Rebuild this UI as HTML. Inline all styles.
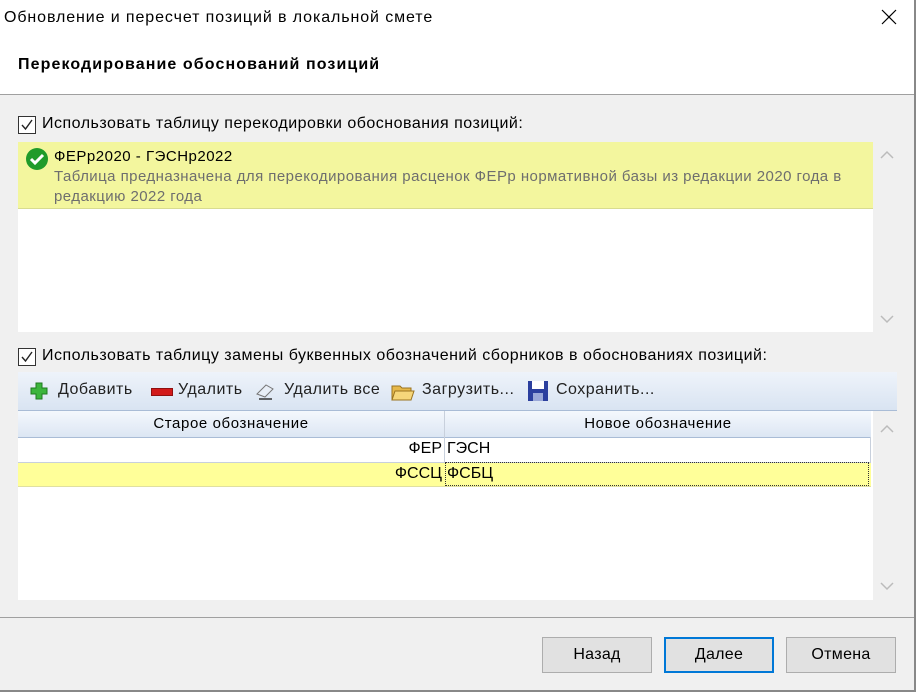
<!DOCTYPE html><html><head><meta charset="utf-8"><style>
body{margin:0;width:916px;height:692px;overflow:hidden;background:#f0f0f0;font-family:"Liberation Sans",sans-serif;font-size:16px;letter-spacing:0.5px;color:#000;position:relative}
.a{position:absolute;white-space:nowrap}
.cb{position:absolute;width:16px;height:16px;border:1px solid #333;background:#fff}
.btn{position:absolute;top:637px;width:108px;height:34px;border:1px solid #adadad;background:#e1e1e1;text-align:center;line-height:34px;font-size:16px;letter-spacing:0.3px}
</style></head><body>
<div class="a" style="left:0;top:0;width:914px;height:94px;background:#fff;border-bottom:1px solid #a0a0a0"></div>
<div class="a" style="left:914px;top:0;width:2px;height:692px;background:#888"></div>
<div class="a" style="left:0;top:690px;width:916px;height:2px;background:#888"></div>
<div class="a" style="left:4px;top:9px;font-size:16px;letter-spacing:0.9px">Обновление и пересчет позиций в локальной смете</div>
<svg class="a" style="left:881px;top:9px" width="16" height="16"><path d="M1 1L15 15M15 1L1 15" stroke="#000" stroke-width="1.2"/></svg>
<div class="a" style="left:18px;top:56px;font-weight:bold;font-size:16px;letter-spacing:1.1px">Перекодирование обоснований позиций</div>
<div class="cb" style="left:18px;top:116px"><svg width="16" height="16"><path d="M3 8l3.5 4L13 3" fill="none" stroke="#222" stroke-width="1.4"/></svg></div>
<div class="a" style="left:42px;top:115px">Использовать таблицу перекодировки обоснования позиций:</div>
<div class="a" style="left:18px;top:142px;width:855px;height:190px;background:#fff"></div>
<div class="a" style="left:873px;top:142px;width:27px;height:190px;background:#f0f0f0"></div>
<div class="a" style="left:18px;top:142px;width:855px;height:66px;background:#f3f69e;border-bottom:1px solid #d8dc90"></div>
<svg class="a" style="left:25px;top:147px" width="24" height="24"><circle cx="12" cy="12" r="11" fill="#1f9b2a"/><path d="M6 12l4 4l8-8" fill="none" stroke="#fff" stroke-width="3"/></svg>
<div class="a" style="left:54px;top:148px;font-size:15px;letter-spacing:0.5px">ФЕРр2020 - ГЭСНр2022</div>
<div class="a" style="left:54px;top:167px;color:#6e6e6e;line-height:20px;font-size:15px;letter-spacing:0.45px">Таблица предназначена для перекодирования расценок ФЕРр нормативной базы из редакции 2020 года в<br>редакцию 2022 года</div>
<svg class="a" style="left:880px;top:150px" width="14" height="10"><path d="M1 8l6-6l6 6" fill="none" stroke="#bbb" stroke-width="1.5"/></svg>
<svg class="a" style="left:880px;top:314px" width="14" height="10"><path d="M1 2l6 6l6-6" fill="none" stroke="#bbb" stroke-width="1.5"/></svg>
<div class="cb" style="left:18px;top:348px"><svg width="16" height="16"><path d="M3 8l3.5 4L13 3" fill="none" stroke="#222" stroke-width="1.4"/></svg></div>
<div class="a" style="left:42px;top:347px">Использовать таблицу замены буквенных обозначений сборников в обоснованиях позиций:</div>
<div class="a" style="left:18px;top:372px;width:879px;height:38px;background:linear-gradient(#eef3fa,#d9e4f2);border-bottom:1px solid #a9bcd6"></div>
<svg class="a" style="left:30px;top:382px" width="18" height="18"><path d="M6 1h6v5h5v6h-5v5H6v-5H1V6h5z" fill="#3cb53c" stroke="#1f7a1f"/></svg>
<div class="a" style="left:58px;top:381px;color:#222">Добавить</div>
<div class="a" style="left:151px;top:388px;width:20px;height:6px;background:#d21a1a;border:1px solid #901010"></div>
<div class="a" style="left:178px;top:381px;color:#222">Удалить</div>
<svg class="a" style="left:254px;top:381px" width="22" height="20"><path d="M3 13l9-9l7 4l-8 8z" fill="#e8eef6" stroke="#777"/><path d="M5 18h13" stroke="#333" stroke-width="1.5"/></svg>
<div class="a" style="left:284px;top:381px;color:#222">Удалить все</div>
<svg class="a" style="left:391px;top:380px" width="24" height="22"><path d="M1 6h8l2 2h9v12H1z" fill="#e6b84a" stroke="#9a7320"/><path d="M4 11h19l-3 9H1z" fill="#f6d67a" stroke="#9a7320"/></svg>
<div class="a" style="left:422px;top:381px;color:#222">Загрузить...</div>
<svg class="a" style="left:527px;top:380px" width="22" height="22"><rect x="1" y="1" width="20" height="20" fill="#2b3f9e"/><rect x="5" y="1" width="12" height="8" fill="#fff"/><rect x="6" y="13" width="10" height="8" fill="#9aa8d8"/></svg>
<div class="a" style="left:556px;top:381px;color:#222">Сохранить...</div>
<div class="a" style="left:18px;top:411px;width:855px;height:189px;background:#fff"></div>
<div class="a" style="left:873px;top:411px;width:27px;height:189px;background:#f0f0f0"></div>
<div class="a" style="left:18px;top:411px;width:426px;height:26px;background:linear-gradient(#f4f8fd,#dce6f3);border-bottom:1px solid #a9bcd6;text-align:center;line-height:26px;font-size:15px;letter-spacing:0.6px">Старое обозначение</div>
<div class="a" style="left:445px;top:411px;width:426px;height:26px;background:linear-gradient(#f4f8fd,#dce6f3);border-bottom:1px solid #a9bcd6;text-align:center;line-height:26px;font-size:15px;letter-spacing:0.6px">Новое обозначение</div>
<div class="a" style="left:444px;top:411px;width:1px;height:76px;background:#c8d0dc"></div>
<div class="a" style="left:870px;top:437px;width:1px;height:50px;background:#c8d0dc"></div>
<div class="a" style="left:18px;top:462px;width:853px;height:25px;background:#ffff99;border-top:1px solid #c8d0dc;border-bottom:1px solid #e0e0a0;box-sizing:border-box"></div>
<div class="a" style="left:18px;top:440px;width:424px;text-align:right;letter-spacing:0">ФЕР</div>
<div class="a" style="left:447px;top:440px;letter-spacing:0">ГЭСН</div>
<div class="a" style="left:18px;top:465px;width:424px;text-align:right;letter-spacing:0">ФССЦ</div>
<div class="a" style="left:445px;top:462px;width:424px;height:24px;border:1px dotted #333;box-sizing:border-box"></div>
<div class="a" style="left:447px;top:465px;letter-spacing:0">ФСБЦ</div>
<svg class="a" style="left:880px;top:424px" width="14" height="10"><path d="M1 8l6-6l6 6" fill="none" stroke="#bbb" stroke-width="1.5"/></svg>
<svg class="a" style="left:880px;top:581px" width="14" height="10"><path d="M1 2l6 6l6-6" fill="none" stroke="#bbb" stroke-width="1.5"/></svg>
<div class="a" style="left:0;top:617px;width:914px;height:1px;background:#a0a0a0"></div>
<div class="btn" style="left:542px">Назад</div>
<div class="btn" style="left:664px;border:2px solid #0078d7;width:106px;height:32px;line-height:32px">Далее</div>
<div class="btn" style="left:786px">Отмена</div>
</body></html>
